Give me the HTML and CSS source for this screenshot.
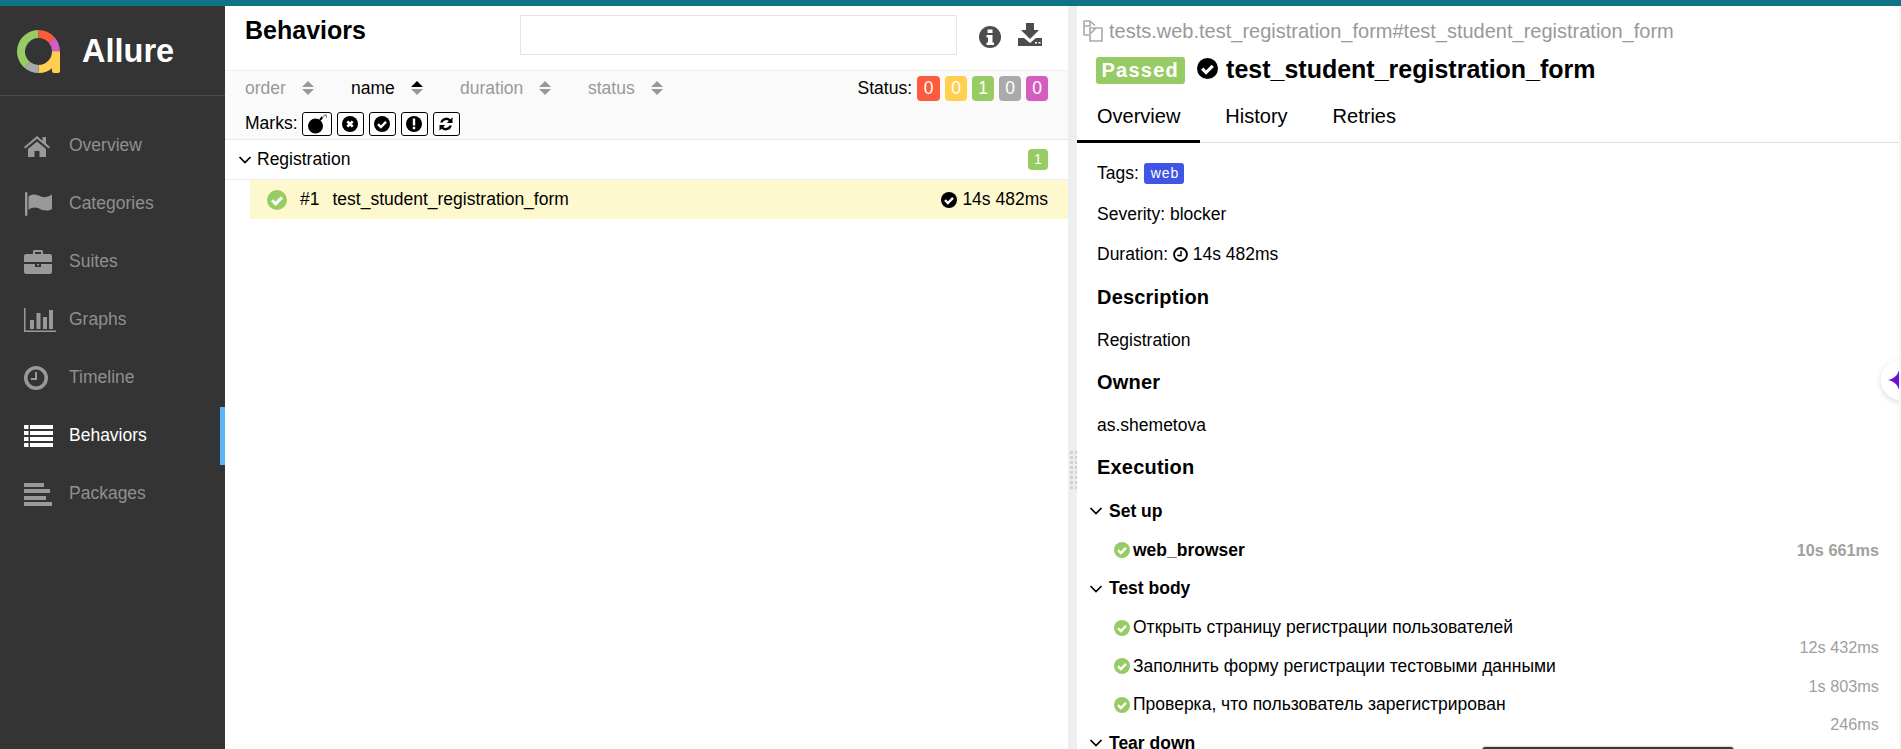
FILE: index.html
```html
<!DOCTYPE html>
<html lang="en">
<head>
<meta charset="utf-8">
<title>Allure</title>
<link rel="stylesheet" href="styles.css">
</head>
<body>
<svg class="sprite" width="0" height="0">
  <symbol id="chk" viewBox="0 0 20 20"><circle cx="10" cy="10" r="10"/><path d="M5 10.2l3.6 3.6L15 7.4" fill="none" stroke="var(--tick,#fff)" stroke-width="3"/></symbol>
  <symbol id="chev" viewBox="0 0 14 14"><path d="M1.5 4l5.5 5.5L12.500 4" fill="none" stroke="currentColor" stroke-width="1.7"/></symbol>
  <symbol id="sort" viewBox="0 0 12 14"><path d="M6 0l6 6H0z" class="up"/><path d="M6 14L0 8h12z"/></symbol>
</svg>
<div class="topbar"></div>
<div class="app">
  <aside class="side">
    <div class="brand">
      <svg class="logo" viewBox="0 0 43 43" width="43" height="43">
        <g fill="none" stroke-width="8">
          <path d="M10.250 34.900A17.500 17.500 0 0 1 21.500 4" stroke="#97cc64"/>
          <path d="M21.500 4A17.500 17.500 0 0 1 34.900 10.250" stroke="#fd5a3e"/>
          <path d="M34.900 10.250A17.500 17.500 0 0 1 39 21.500" stroke="#d35ebe"/>
          <path d="M39 21.500A17.500 17.500 0 0 1 21.500 39" stroke="#ffd050"/>
          <path d="M21.500 39A17.500 17.500 0 0 1 10.250 34.900" stroke="#aaaaaa"/>
        </g>
        <path d="M35 21.500h8V41a2 2 0 0 1-2 2h-4a2 2 0 0 1-2-2z" fill="#ffd050"/>
      </svg>
      <span class="brand-name">Allure</span>
    </div>
    <nav class="nav">
      <a class="nav-item"><span class="nav-ico"><svg viewBox="0 0 26 21" width="26" height="21"><path d="M13 0L0 11l1.300 1.500L13 2.700l11.700 9.800L26 11l-4-3.400V1h-3.500v3.700zM4 13v8h6.500v-6h5v6H22v-8l-9-7.500z"/></svg></span>Overview</a>
      <a class="nav-item"><span class="nav-ico"><svg viewBox="0 0 28 24" width="28" height="24"><rect x="1" y="0" width="2.400" height="24" rx="1.200"/><path d="M4.500 4.500C9 1 14 3 17 4.500S24 5 28 2.500V17C23 20 18 18 15 16.500S8 15 4.500 18z"/></svg></span>Categories</a>
      <a class="nav-item"><span class="nav-ico"><svg viewBox="0 0 28 24" width="28" height="24"><path d="M9 4V1.500A1.500 1.500 0 0 1 10.500 0h7A1.500 1.500 0 0 1 19 1.500V4h7a2 2 0 0 1 2 2v6H0V6a2 2 0 0 1 2-2zm2 0h6V2h-6zM0 14h11v3h6v-3h11v8a2 2 0 0 1-2 2H2a2 2 0 0 1-2-2zm13 0h2v1.500h-2z" fill-rule="evenodd"/></svg></span>Suites</a>
      <a class="nav-item"><span class="nav-ico"><svg viewBox="0 0 32 24" width="32" height="24"><path d="M0 0h1.500v22.500H32V24H0zM6 12h4v9H6zM12.500 5h4v16h-4zM19 9h4v12h-4zM25 2h4v19h-4z"/></svg></span>Graphs</a>
      <a class="nav-item"><span class="nav-ico"><svg viewBox="0 0 24 24" width="24" height="24"><path d="M12 0a12 12 0 1 0 0 24 12 12 0 0 0 0-24zm0 3.500a8.500 8.500 0 1 1 0 17 8.500 8.500 0 0 1 0-17zM11 6h2v8H7v-2h4z" fill-rule="evenodd"/></svg></span>Timeline</a>
      <a class="nav-item is-active"><span class="nav-ico"><svg viewBox="0 0 29 22" width="29" height="22"><path d="M0 0h4.500v4H0zM6 0h23v4H6zM0 6h4.500v4H0zM6 6h23v4H6zM0 12h4.500v4H0zM6 12h23v4H6zM0 18h4.500v4H0zM6 18h23v4H6z"/></svg></span>Behaviors</a>
      <a class="nav-item"><span class="nav-ico"><svg viewBox="0 0 28 23" width="28" height="23"><path d="M0 0h20v4H0zM0 6h26v4H0zM0 13h22v4H0zM0 19h28v4H0z"/></svg></span>Packages</a>
    </nav>
  </aside>

  <main class="list-pane">
    <header class="list-head">
      <h2 class="list-title">Behaviors</h2>
      <input class="search" type="text">
      <svg class="tool info" viewBox="0 0 22 22" width="22" height="22"><circle cx="11" cy="11" r="11"/><path d="M8.500 3.500h5V7h-5zM7.500 9h6v7.500h1.500V19H7.500v-2.500H9V11.500H7.500z" fill="#fff"/></svg>
      <svg class="tool dl" viewBox="0 0 24 23" width="24" height="23"><path d="M8 0h8v7h5l-9 9L3 7h5z"/><path d="M0 15h6l6 5 6-5h6v8H0z"/><path d="M17 19h2v1.500h-2zM20.500 19h2v1.500h-2z" fill="#fff"/></svg>
    </header>
    <div class="toolbar">
      <div class="tool-row">
        <span class="sorter"><span class="sorter-label">order</span><svg class="sort-ico"><use href="#sort"/></svg></span>
        <span class="sorter is-sorted"><span class="sorter-label">name</span><svg class="sort-ico"><use href="#sort"/></svg></span>
        <span class="sorter"><span class="sorter-label">duration</span><svg class="sort-ico"><use href="#sort"/></svg></span>
        <span class="sorter"><span class="sorter-label">status</span><svg class="sort-ico"><use href="#sort"/></svg></span>
        <span class="status-box">Status:
          <b class="count c-failed">0</b><b class="count c-broken">0</b><b class="count c-passed">1</b><b class="count c-skipped">0</b><b class="count c-unknown">0</b>
        </span>
      </div>
      <div class="marks">Marks:
        <span class="mark mark-wide"><svg viewBox="0 0 20 20" width="20" height="20"><circle cx="8.500" cy="12" r="7.500"/><path d="M13 6l2.500-3" stroke="#000" stroke-width="2"/><path d="M15 3.500l4-2.500M16.500 1H19.500V4" stroke="#888" stroke-width="1" fill="none"/></svg></span>
        <span class="mark"><svg viewBox="0 0 16 16" width="16" height="16"><circle cx="8" cy="8" r="8"/><path d="M5.300 5.300l5.400 5.400m0-5.400l-5.400 5.400" stroke="#fff" stroke-width="2.600"/></svg></span>
        <span class="mark"><svg width="16" height="16"><use href="#chk"/></svg></span>
        <span class="mark"><svg viewBox="0 0 16 16" width="16" height="16"><circle cx="8" cy="8" r="8"/><path d="M6.800 2.500h2.400v7H6.800zM6.800 10.800h2.400v2.400H6.800z" fill="#fff"/></svg></span>
        <span class="mark"><svg viewBox="0 0 18 18" width="18" height="18"><path d="M3.200 7.500A6.200 6.200 0 0 1 13.500 4.300L15.500 2.300V8H9.800l2-2A3.900 3.900 0 0 0 5.600 7.500zM14.800 10.500A6.200 6.200 0 0 1 4.500 13.700L2.500 15.700V10H8.200l-2 2a3.900 3.900 0 0 0 6.200-1.500z"/></svg></span>
      </div>
    </div>
    <div class="group">
      <div class="group-head">
        <svg class="chev"><use href="#chev"/></svg>
        <span class="group-name">Registration</span>
        <b class="count group-count c-passed">1</b>
      </div>
      <div class="case">
        <svg class="case-status"><use href="#chk"/></svg>
        <span class="case-order">#1</span>
        <span class="case-name">test_student_registration_form</span>
        <svg class="case-chk"><use href="#chk"/></svg>
        <span class="case-time">14s 482ms</span>
      </div>
    </div>
  </main>

  <div class="splitter"><span class="grip"></span></div>

  <section class="detail">
    <div class="path"><svg class="copy" viewBox="0 0 20 22" width="20" height="22"><path d="M7 1H1v14h5M7 1v5H1M7 1l5 4.500M7 8h12v13H7zM7 14l6-6" fill="none" stroke="#aaa" stroke-width="1.600"/></svg>tests.web.test_registration_form#test_student_registration_form</div>
    <div class="title-row">
      <span class="verdict">Passed</span>
      <svg class="title-chk"><use href="#chk"/></svg>
      <h2 class="test-name">test_student_registration_form</h2>
    </div>
    <div class="tabs">
      <span class="tab is-current">Overview</span>
      <span class="tab">History</span>
      <span class="tab">Retries</span>
    </div>
    <div class="pane">
      <p class="line">Tags: <span class="tag">web</span></p>
      <p class="line">Severity: blocker</p>
      <p class="line">Duration: <svg class="clock" viewBox="0 0 14 14" width="15" height="15"><circle cx="7" cy="7" r="6" fill="none" stroke="#000" stroke-width="1.800"/><path d="M7.500 3.500V8H4" fill="none" stroke="#000" stroke-width="1.400"/></svg> 14s 482ms</p>
      <h3 class="head">Description</h3>
      <p class="line">Registration</p>
      <h3 class="head">Owner</h3>
      <p class="line">as.shemetova</p>
      <h3 class="head">Execution</h3>
      <div class="stage"><svg class="chev"><use href="#chev"/></svg>Set up</div>
      <div class="step is-bold"><svg class="step-ico"><use href="#chk"/></svg><span class="step-name">web_browser</span><span class="step-time">10s 661ms</span></div>
      <div class="stage"><svg class="chev"><use href="#chev"/></svg>Test body</div>
      <div class="step"><svg class="step-ico"><use href="#chk"/></svg><span class="step-name">Открыть страницу регистрации пользователей</span><span class="step-time is-low">12s 432ms</span></div>
      <div class="step"><svg class="step-ico"><use href="#chk"/></svg><span class="step-name">Заполнить форму регистрации тестовыми данными</span><span class="step-time is-low">1s 803ms</span></div>
      <div class="step"><svg class="step-ico"><use href="#chk"/></svg><span class="step-name">Проверка, что пользователь зарегистрирован</span><span class="step-time is-low">246ms</span></div>
      <div class="stage"><svg class="chev"><use href="#chev"/></svg>Tear down</div>
    </div>
  </section>
</div>
<div class="helper"><svg viewBox="0 0 24 24" width="22" height="20" preserveAspectRatio="none"><path d="M12 0C13 6 18 11 24 12 18 13 13 18 12 24 11 18 6 13 0 12 6 11 11 6 12 0z"/></svg></div>
<div class="edge"></div>
<div class="toast"></div>
</body>
</html>
```
FILE: styles.css
```css
* { box-sizing: border-box; }
html, body { margin: 0; height: 100%; overflow: hidden; }
body { font: 17.5px/1.43 "Liberation Sans", "Noto Sans", sans-serif; color: #000; background: #fff; }
.sprite { position: absolute; }
.topbar { height: 6px; background: #0d7385; }
.app { display: flex; height: 743px; overflow: hidden; }

.side { flex: 0 0 225px; background: #343434; color: #999; }
.brand { display: flex; align-items: center; height: 90px; border-bottom: 1px solid #4c4c4c; padding-left: 17px; }
.logo { display: block; margin-top: 1px; }
.brand-name { margin: 2px 0 0 22px; font-size: 32.5px; font-weight: 700; color: #fff; line-height: 1; }
.nav { padding-top: 21px; }
.nav-item { display: flex; align-items: center; height: 58px; padding-left: 24px; color: #8f8f8f; }
.nav-ico { flex: 0 0 45px; display: flex; height: 24px; align-items: center; }
.nav-ico svg { fill: #999; display: block; }
.is-active { color: #fff; border-right: 5px solid #5cb3f7; }
.is-active svg { fill: #fff; }

.list-pane { flex: 0 0 843px; }
.list-head { display: flex; align-items: flex-start; height: 64px; padding: 9px 0 0 20px; }
.list-title { margin: 0; flex: 0 0 275px; font-size: 25px; line-height: 30px; font-weight: 700; }
.search { width: 437px; height: 40px; border: 1px solid #e5e5e5; background: #fff; }
.tool { fill: #4d4d4d; }
.info { margin: 11px 0 0 22px; }
.dl { margin: 8px 0 0 17px; }
.toolbar { height: 70px; background: #fafafa; border-top: 1px solid #eee; border-bottom: 1px solid #e8e8e8; padding: 0 20px; }
.tool-row { display: flex; align-items: center; height: 33px; margin-top: 1px; }
.sorter { display: flex; align-items: center; color: #999; }
.sorter-label { margin-right: 16px; }
.sorter:nth-child(1) { width: 106px; }
.sorter:nth-child(2) { width: 109px; }
.sorter:nth-child(3) { width: 128px; }
.is-sorted { color: #000; }
.sort-ico { width: 12px; height: 14px; fill: #999; }
.up { fill: var(--up, #999); }
.is-sorted .sort-ico { --up: #000; }
.status-box { margin-left: auto; display: flex; align-items: center; }
.count { display: inline-block; min-width: 22px; height: 25px; margin-left: 5px; border-radius: 4px; color: #fff; font-weight: 400; font-size: 17.5px; line-height: 25px; text-align: center; }
.c-failed { background: #fd5a3e; width: 23px; }
.c-broken { background: #ffd050; }
.c-passed { background: #97cc64; }
.c-skipped { background: #aaa; }
.c-unknown { background: #d35ebe; }
.marks { display: flex; align-items: center; height: 26px; margin-top: 6px; gap: 5px; }
.mark { display: flex; align-items: center; justify-content: center; width: 27px; height: 24px; border: 1px solid #000; border-radius: 3px; background: #fff; }
.mark-wide { width: 30px; margin-left: -1px; }
.group-head { display: flex; align-items: center; height: 40px; padding: 0 20px 0 13px; border-bottom: 1px solid #eee; }
.chev { width: 14px; height: 14px; flex: none; color: #000; }
.group-name { margin-left: 5px; }
.group-count { margin-left: auto; height: 21px; min-width: 20px; width: 20px; line-height: 21px; font-size: 14px; }
.case { display: flex; align-items: center; height: 39px; margin-left: 25px; padding: 1px 20px 0 17px; background: #fef8ce; }
.case-status { width: 20px; height: 20px; fill: #97cc64; }
.case-order { margin-left: 13px; }
.case-name { margin-left: 13px; }
.case-chk { margin-left: auto; width: 16px; height: 16px; }
.case-time { margin-left: 5px; }

.splitter { flex: 0 0 9px; background: #eceff2; position: relative; }
.grip { position: absolute; left: 2px; top: 445px; width: 7px; height: 38px; background: linear-gradient(transparent 3px, #eceff2 3px) 0 0 / 5px 5px, linear-gradient(90deg, transparent 3px, #eceff2 3px) 0 0 / 5px 5px, #cfd1d3; }

.detail { flex: 1; min-width: 0; }
.path { display: flex; align-items: center; height: 41px; padding: 8px 0 0 6px; color: #999; font-size: 20px; line-height: 1; }
.copy { margin-right: 6px; flex: none; }
.title-row { display: flex; align-items: center; height: 47px; padding-left: 18.500px; }
.verdict { padding: 0 6px; height: 27px; border-radius: 3px; background: #97cc64; color: #fff; font-weight: 700; font-size: 20px; line-height: 27px; letter-spacing: 1.25px; }
.title-chk { width: 21px; height: 21px; margin: -4px 0 0 12px; flex: none; }
.test-name { margin: -3px 0 0 8px; font-size: 25px; font-weight: 700; line-height: 1; }
.tabs { display: flex; gap: 5px; height: 49px; border-bottom: 1px solid #e0e0e0; }
.tab { padding: 8px 20px 0; height: 49px; font-size: 20px; }
.is-current { border-bottom: 3px solid #000; }
.pane { padding: 10.500px 0 0 20px; }
.line { margin: 0; height: 40.600px; display: flex; align-items: center; white-space: pre; }
.tag { display: inline-block; padding: 0 5px 0 7px; height: 21px; border-radius: 3px; background: #4054e6; color: #fff; font-size: 14px; line-height: 21px; letter-spacing: 1px; }
.clock { flex: none; }
.head { margin: 0; height: 44.500px; font-size: 20px; line-height: 44.500px; font-weight: 700; letter-spacing: .2px; }
.head + .stage { margin-top: 2px; }
.stage { display: flex; align-items: center; gap: 6px; height: 39px; margin-left: -8px; font-weight: 700; }
.step { position: relative; display: flex; align-items: center; height: 38.500px; padding-left: 17px; }
.step-ico { width: 16px; height: 16px; fill: #97cc64; flex: none; }
.step-name { margin-left: 3px; }
.is-bold { font-weight: 700; }
.step-time { position: absolute; right: 22px; top: 0; line-height: 38.500px; color: #a0a0a0; font-size: 16.250px; }
.is-low { top: 20px; font-weight: 400; }

.helper { position: fixed; right: -20px; top: 360px; width: 40px; height: 40px; display: flex; align-items: center; padding-left: 7px; border-radius: 50%; background: #fff; box-shadow: 0 2px 6px rgba(0,0,0,.14); fill: #6a0fd6; }
.edge { position: fixed; right: 0; top: 6px; bottom: 0; width: 2px; background: #f6f6f6; }
.toast { position: fixed; left: 1482px; bottom: -6px; width: 252px; height: 8px; border-radius: 4px 4px 0 0; background: #3a3a3a; box-shadow: 0 0 2px rgba(0,0,0,.5); }
```
